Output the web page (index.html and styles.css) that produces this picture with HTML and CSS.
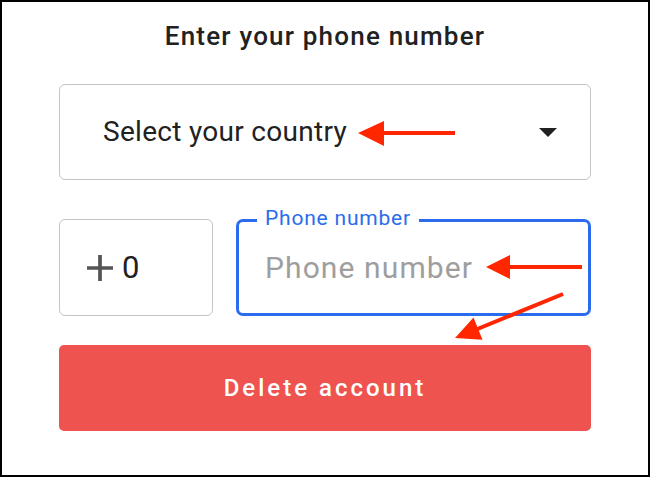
FILE: index.html
```html
<!DOCTYPE html>
<html>
<head>
<meta charset="utf-8">
<link rel="stylesheet" href="styles.css">
</head>
<body>
<div class="frame">
  <h1 class="title">Enter your phone number</h1>
  <div class="select">
    <span class="select-text">Select your country</span>
    <svg class="caret" width="18" height="9" viewBox="0 0 18 9"><path d="M0 0h18L9 9z" fill="#212121"/></svg>
  </div>
  <div class="phone-row">
    <div class="code">
      <svg class="plus" width="26" height="26" viewBox="5 5 14 14"><path d="M19 13h-6v6h-2v-6H5v-2h6V5h2v6h6v2z" fill="#555"/></svg>
      <span class="code-num">0</span>
    </div>
    <div class="phone">
      <span class="phone-label">Phone number</span>
      <span class="phone-placeholder">Phone number</span>
    </div>
  </div>
  <button class="delete">Delete account</button>
  <svg class="annot" width="650" height="477" viewBox="0 0 650 477">
    <g fill="#ff2600" stroke="none">
      <rect x="382" y="131" width="73" height="4"/>
      <polygon points="358,133 384,121 384,146"/>
      <rect x="508" y="265" width="74" height="4"/>
      <polygon points="486,267 510,255 510,279"/>
      <polygon points="455,338 473.5,317.5 482.5,339.7"/>
    </g>
    <line x1="563" y1="294" x2="475" y2="330" stroke="#ff2600" stroke-width="4"/>
  </svg>
</div>
</body>
</html>
```
FILE: styles.css
```css
html, body {
  margin: 0;
  padding: 0;
  background: #fff;
}
.frame {
  position: relative;
  width: 650px;
  height: 477px;
  box-sizing: border-box;
  border: 2px solid #000;
  padding: 20px 57px 0 57px;
  font-family: Roboto, "Liberation Sans", sans-serif;
  color: #212121;
}
.title {
  margin: 0;
  font-size: 26px;
  line-height: 28px;
  font-weight: 500;
  letter-spacing: 1.2px;
  text-align: center;
  color: #212121;
}
.select {
  margin-top: 34px;
  height: 96px;
  box-sizing: border-box;
  border: 1.5px solid #c4c4c4;
  border-radius: 6px;
  display: flex;
  align-items: center;
  justify-content: space-between;
  padding: 0 33px 0 43px;
}
.select-text {
  font-size: 28px;
  line-height: 32px;
  letter-spacing: 0.3px;
}
.phone-row {
  margin-top: 39px;
  display: flex;
  gap: 23px;
  height: 97px;
}
.code {
  width: 154px;
  box-sizing: border-box;
  border: 1.5px solid #c4c4c4;
  border-radius: 6px;
  display: flex;
  align-items: center;
  padding-left: 27px;
  gap: 9px;
}
.code-num {
  font-size: 31px;
  line-height: 32px;
  color: #212121;
}
.phone {
  position: relative;
  flex: 1;
  box-sizing: border-box;
  border: 3px solid #2a6ced;
  border-radius: 7px;
  display: flex;
  align-items: center;
  padding-left: 26px;
}
.phone-label {
  position: absolute;
  left: 18px;
  top: -16px;
  padding: 0 8px;
  background: #fff;
  color: #2a6ced;
  font-size: 21px;
  line-height: 24px;
  letter-spacing: 0.8px;
}
.phone-placeholder {
  font-size: 30px;
  line-height: 32px;
  letter-spacing: 1.1px;
  color: #9e9e9e;
}
.delete {
  display: block;
  width: 100%;
  margin-top: 29px;
  height: 86px;
  border: none;
  border-radius: 5px;
  background: #ef5350;
  color: #fff;
  font-family: Roboto, "Liberation Sans", sans-serif;
  font-size: 24px;
  font-weight: 500;
  letter-spacing: 3px;
  padding: 0;
}
.annot {
  position: absolute;
  left: -2px;
  top: -2px;
  pointer-events: none;
}
```
